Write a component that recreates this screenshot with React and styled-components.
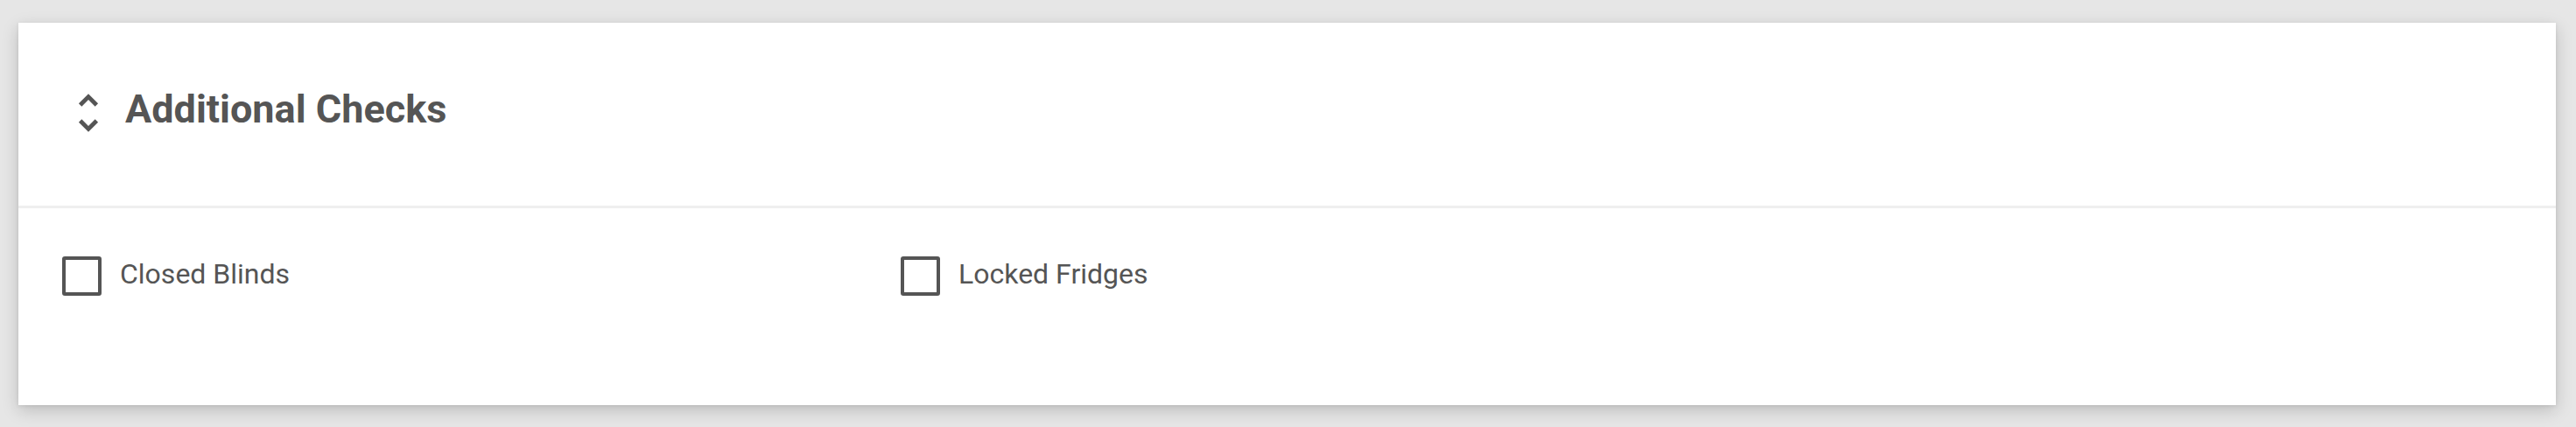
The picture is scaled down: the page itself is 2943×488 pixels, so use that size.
import styled, { createGlobalStyle } from "styled-components";

const GlobalStyle = createGlobalStyle`
  html, body {
    margin: 0;
    padding: 0;
    background: #e6e6e6;
    font-family: Roboto, "Liberation Sans", Arial, sans-serif;
  }
`;

const Page = styled.div`
  padding: 26px 23px 25px 21px;
`;

const Card = styled.section`
  background: #ffffff;
  height: 437px;
  box-shadow: 0 6px 18px rgba(0, 0, 0, 0.18), 0 1px 4px rgba(0, 0, 0, 0.08);
  display: flex;
  flex-direction: column;
`;

const Header = styled.header`
  height: 212px;
  box-sizing: border-box;
  padding: 0 51px 3px;
  display: flex;
  align-items: center;
  gap: 13px;
  border-bottom: 3px solid #efefef;
  flex-shrink: 0;
`;

const ToggleIcon = styled.svg`
  width: 58px;
  height: 58px;
  fill: #555;
  flex-shrink: 0;
`;

const Title = styled.h2`
  margin: 0;
  padding-bottom: 10px;
  font-size: 45px;
  font-weight: 700;
  color: #555;
`;

const Body = styled.div`
  padding: 55px 50px 0;
  display: grid;
  grid-template-columns: repeat(auto-fill, 958px);
`;

const Check = styled.label`
  height: 45px;
  display: flex;
  align-items: center;
  gap: 21px;
  cursor: pointer;
`;

const Box = styled.span`
  width: 45px;
  height: 45px;
  box-sizing: border-box;
  border: 4.5px solid #555;
  border-radius: 3px;
  background: ${(p) => (p.checked ? "#555" : "transparent")};
  flex-shrink: 0;
`;

const Label = styled.span`
  font-size: 32px;
  line-height: 45px;
  color: #555;
  margin-bottom: 5px;
`;

const checks = [
  { label: "Closed Blinds", checked: false },
  { label: "Locked Fridges", checked: false },
];

export default function App() {
  return (
    <Page>
      <GlobalStyle />
      <Card>
        <Header>
          <ToggleIcon viewBox="0 0 24 24">
            <path d="M12 5.83L15.17 9l1.41-1.41L12 3 7.41 7.59 8.83 9 12 5.83zm0 12.34L8.83 15l-1.41 1.41L12 21l4.59-4.59L15.17 15 12 18.17z" />
          </ToggleIcon>
          <Title>Additional Checks</Title>
        </Header>
        <Body>
          {checks.map((c) => (
            <Check key={c.label}>
              <Box checked={c.checked} />
              <Label>{c.label}</Label>
            </Check>
          ))}
        </Body>
      </Card>
    </Page>
  );
}
